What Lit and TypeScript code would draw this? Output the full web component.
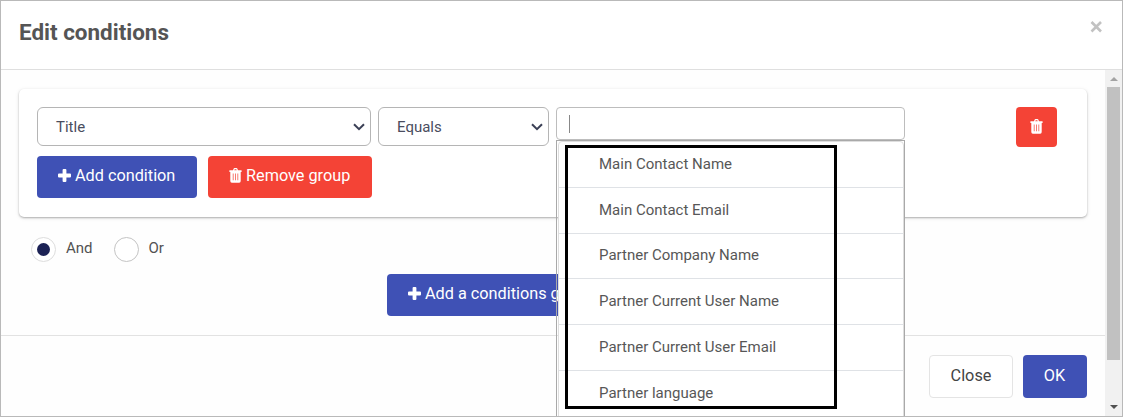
import { LitElement, html, css } from "lit";
import { customElement } from "lit/decorators.js";

const plus = html`<svg class="ico plus" viewBox="0 0 13 13" width="13" height="13">
  <path fill="currentColor" d="M5.6 0h1.8q1 0 1 1v3.6H12q1 0 1 1v1.8q0 1-1 1H8.400V12q0 1-1 1H5.600q-1 0-1-1V8.400H1q-1 0-1-1V5.600q0-1 1-1h3.600V1q0-1 1-1z"/>
</svg>`;

const trash = html`<svg class="ico trash" viewBox="0 0 13 15" width="13" height="15">
  <path fill="currentColor" fill-rule="evenodd" d="M4 2.200 4.600.7Q4.900.1 5.500.1h2q.6 0 .9.600L9 2.200h3.200q.5 0 .5.500v.9q0 .4-.5.400h-.5v9q0 1.700-1.500 1.700H2.800q-1.500 0-1.500-1.700V4H.8q-.5 0-.5-.4v-.9q0-.5.500-.5zM5.300 2.200h2.400L7.300 1.200H5.700zM3.800 5.500v6.700h.7V5.500zm2.350 0v6.700h.7V5.500zm2.350 0v6.700h.7V5.500z"/>
</svg>`;

const chevron = html`<svg class="chev" viewBox="0 0 12 8" width="12" height="8">
  <path d="M1 1.200 6 6.200l5-5" fill="none" stroke="#3b4056" stroke-width="2"/>
</svg>`;

const options = [
  "Main Contact Name",
  "Main Contact Email",
  "Partner Company Name",
  "Partner Current User Name",
  "Partner Current User Email",
  "Partner language",
];

@customElement("app-root")
export class AppRoot extends LitElement {
  static styles = css`
    :host {
      display: block;
      height: 417px;
      overflow: hidden;
      font-family: Roboto, sans-serif;
      font-size: 15px;
      color: #525252;
    }
    * { box-sizing: border-box; }
    .dialog {
      position: relative;
      display: flex;
      flex-direction: column;
      height: 417px;
      border: 1px solid #b9b9b9;
      background: #fff;
      overflow: hidden;
    }
    .head {
      flex: none;
      height: 69px;
      display: flex;
      justify-content: space-between;
      padding: 17px 16px 0 18px;
      border-bottom: 1px solid #dfdfdf;
    }
    .title { margin: 0; font-size: 22.450px; line-height: 28px; font-weight: 700; color: #555; white-space: nowrap; }
    .x { display: block; margin-top: 3px; }
    .main { flex: 1; display: flex; min-height: 0; }
    .body { flex: 1; min-width: 0; background: #fefefe; }
    .content { height: 266px; padding: 19px 18px 0; border-bottom: 1px solid #e2e2e2; }
    .card {
      height: 128px;
      padding: 18px 30px 0 18px;
      border-radius: 5px;
      background: #fff;
      box-shadow: 0 1px 2px rgba(0, 0, 0, .28), 0 1px 5px rgba(0, 0, 0, .08);
    }
    .row { display: flex; gap: 7px; height: 39px; }
    .select {
      display: flex;
      align-items: center;
      justify-content: space-between;
      height: 39px;
      padding: 0 5px 0 18px;
      border: 1px solid #b5b5b5;
      border-radius: 6px;
      color: #4a4d5e;
      background: #fff;
    }
    .field { width: 334px; }
    .operator { width: 171px; }
    .combo { position: relative; width: 349px; }
    .input { height: 33px; padding: 7px 12px; border: 1px solid #bdbdbd; border-radius: 4px; background: #fff; }
    .caret { width: 1px; height: 18px; background: #888; }
    .menu {
      position: absolute;
      z-index: 2;
      top: 33px;
      left: 0;
      width: 349px;
      height: 285px;
      border: 1px solid #a9a9a9;
      padding: 0 0 0 1px;
    }
    .list { border: 1px solid #dedede; border-radius: 4px 4px 0 0; margin: 0; padding: 0; list-style: none; height: 100%; background: #fff; }
    .item { height: 45.750px; line-height: 44px; padding-left: 40px; border-bottom: 1px solid #dfe2e6; color: #575757; }
    .item:nth-child(3) { line-height: 43px; }
    .mark {
      position: absolute;
      z-index: 3;
      left: 9px;
      top: 38px;
      width: 272px;
      height: 264px;
      border: 3px solid #000;
    }
    .btn {
      display: inline-flex;
      align-items: center;
      height: 42px;
      padding: 0 21px 3px;
      border-radius: 4px;
      color: #fff;
      font-size: 16.250px;
      white-space: nowrap;
      gap: 4px;
    }
    .blue { background: #3f51b5; }
    .red { background: #f44336; }
    .ico { flex: none; display: block; }
    .del { margin-left: auto; width: 41px; height: 40px; padding: 0 0 1px; justify-content: center; }
    .actions { display: flex; gap: 11px; margin-top: 10px; }
    .add { width: 160px; }
    .remove { width: 164px; }
    .radios { display: flex; align-items: center; height: 25px; margin: 20px 0 0 12px; }
    .radio { width: 25px; height: 25px; border: 1px solid #c4c4c4; border-radius: 50%; display: grid; place-items: center; background: #fff; }
    .on { border-color: #ddd; }
    .dot { width: 13px; height: 13px; border-radius: 50%; background: #1c2255; margin-top: -1px; }
    .lab { margin: -3px 21px 0 10px; }
    .group { display: flex; margin: 12px 0 0 368px; }
    .foot { display: flex; justify-content: flex-end; gap: 10px; padding: 19px 18px 0; }
    .foot .btn { height: 43px; justify-content: center; padding: 0 0 2px; }
    .foot .close { width: 84px; border: 1px solid #e4e4e4; color: #444; background: #fff; }
    .foot .ok { width: 64px; padding-right: 1px; }
    .scroll { width: 17px; background: #f1f1f1; display: flex; flex-direction: column; align-items: center; justify-content: space-between; padding-bottom: 7px; }
    .up { height: 17px; display: flex; align-items: center; }
    .thumb { width: 13px; height: 273px; background: #c1c1c1; margin-bottom: auto; }
    .arrow { display: block; }
  `;

  render() {
    return html`
      <div class="dialog">
        <div class="head">
          <h1 class="title">Edit conditions</h1>
          <svg class="x" width="16" height="12" viewBox="0 0 16 12">
            <path d="M1.500 1 11 10.500M11 1 1.500 10.500" stroke="#c2c2c2" stroke-width="2.600" />
          </svg>
        </div>
        <div class="main">
          <div class="body">
            <div class="content">
              <div class="card">
                <div class="row">
                  <div class="select field"><span>Title</span>${chevron}</div>
                  <div class="select operator"><span>Equals</span>${chevron}</div>
                  <div class="combo">
                    <div class="input"><div class="caret"></div></div>
                    <div class="menu">
                      <ul class="list">${options.map((o) => html`<li class="item">${o}</li>`)}</ul>
                    </div>
                    <div class="mark"></div>
                  </div>
                  <div class="btn red del">${trash}</div>
                </div>
                <div class="actions">
                  <div class="btn blue add">${plus}<span>Add condition</span></div>
                  <div class="btn red remove">${trash}<span>Remove group</span></div>
                </div>
              </div>
              <div class="radios">
                <span class="radio on"><span class="dot"></span></span><span class="lab">And</span>
                <span class="radio"></span><span class="lab">Or</span>
              </div>
              <div class="group"><div class="btn blue">${plus}<span>Add a conditions group</span></div></div>
            </div>
            <div class="foot">
              <div class="btn close">Close</div>
              <div class="btn blue ok">OK</div>
            </div>
          </div>
          <div class="scroll">
            <div class="up"><svg class="arrow" width="8" height="4" viewBox="0 0 8 4"><path d="M0 4 4 0l4 4z" fill="#a3a3a3"/></svg></div>
            <div class="thumb"></div>
            <svg class="arrow" width="8" height="4" viewBox="0 0 8 4"><path d="M0 0h8L4 4z" fill="#505050"/></svg>
          </div>
        </div>
      </div>
    `;
  }
}
